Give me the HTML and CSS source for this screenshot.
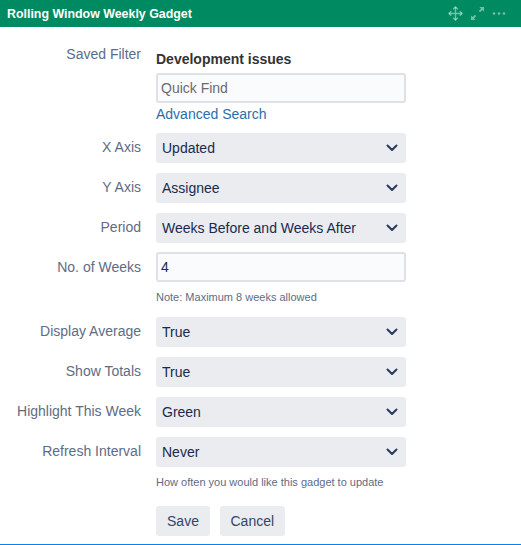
FILE: index.html
```html
<!DOCTYPE html>
<html lang="en">
<head>
    <meta charset="UTF-8">
    <meta name="viewport" content="width=device-width, initial-scale=1.0">
    <title>Rolling Window Weekly Gadget</title>
    <link rel="stylesheet" href="styles.css">
</head>
<body>
    <div class="gadget">
        <div class="gadget-header">
            <h1>Rolling Window Weekly Gadget</h1>
            <div class="header-icons">
                <svg width="15" height="15" viewBox="0 0 16 16" fill="none" stroke="currentColor" stroke-width="1.500">
                    <path d="M8 1v14M1 8h14"/>
                    <path d="M5.500 3.500 8 1l2.500 2.500M5.500 12.500 8 15l2.500-2.500M3.500 5.500 1 8l2.500 2.500M12.500 5.500 15 8l-2.500 2.500"/>
                </svg>
                <svg width="15" height="15" viewBox="0 0 16 16" fill="currentColor">
                    <path d="M10 1h5v5l-1.800-1.800-2.500 2.500-1.400-1.400 2.500-2.500z"/>
                    <path d="M6 15H1v-5l1.800 1.800 2.500-2.500 1.400 1.400-2.500 2.500z"/>
                </svg>
                <svg width="14" height="15" viewBox="0 0 14 15" fill="currentColor">
                    <circle cx="2" cy="7.500" r="1.300"/>
                    <circle cx="7" cy="7.500" r="1.300"/>
                    <circle cx="12" cy="7.500" r="1.300"/>
                </svg>
            </div>
        </div>

        <form class="gadget-form">
            <div class="form-row filter-row">
                <label>Saved Filter</label>
                <div class="field">
                    <div class="filter-name">Development issues</div>
                    <input type="text" class="text-input quick-find" placeholder="Quick Find">
                    <a href="#" class="advanced-link">Advanced Search</a>
                </div>
            </div>

            <div class="form-row">
                <label for="xAxis">X Axis</label>
                <div class="field">
                    <select id="xAxis"><option>Updated</option></select>
                </div>
            </div>

            <div class="form-row">
                <label for="yAxis">Y Axis</label>
                <div class="field">
                    <select id="yAxis"><option>Assignee</option></select>
                </div>
            </div>

            <div class="form-row period-row">
                <label for="period">Period</label>
                <div class="field">
                    <select id="period"><option>Weeks Before and Weeks After</option></select>
                </div>
            </div>

            <div class="form-row weeks-row">
                <label for="weeks">No. of Weeks</label>
                <div class="field">
                    <input type="text" id="weeks" class="text-input" value="4">
                    <div class="hint">Note: Maximum 8 weeks allowed</div>
                </div>
            </div>

            <div class="form-row">
                <label for="average">Display Average</label>
                <div class="field">
                    <select id="average"><option>True</option></select>
                </div>
            </div>

            <div class="form-row">
                <label for="totals">Show Totals</label>
                <div class="field">
                    <select id="totals"><option>True</option></select>
                </div>
            </div>

            <div class="form-row">
                <label for="highlight">Highlight This Week</label>
                <div class="field">
                    <select id="highlight"><option>Green</option></select>
                </div>
            </div>

            <div class="form-row">
                <label for="refresh">Refresh Interval</label>
                <div class="field">
                    <select id="refresh"><option>Never</option></select>
                    <div class="hint">How often you would like this gadget to update</div>
                </div>
            </div>

            <div class="form-row buttons-row">
                <div class="field buttons">
                    <button type="button">Save</button>
                    <button type="button">Cancel</button>
                </div>
            </div>
        </form>
    </div>
</body>
</html>
```

FILE: styles.css
```css
* {
    box-sizing: border-box;
}

body {
    margin: 0;
    background-color: white;
    font-family: "Liberation Sans", Arial, sans-serif;
    font-size: 14px;
    color: #172b4d;
}

.gadget {
    height: 545px;
    border-bottom: 1px solid #0482ef;
}

.gadget-header {
    height: 27px;
    padding: 0 7px;
    display: flex;
    align-items: center;
    justify-content: space-between;
    background-color: #008a61;
}

.gadget-header h1 {
    margin: 0;
    font-size: 12.400px;
    font-weight: 700;
    color: white;
}

.header-icons {
    display: flex;
    align-items: center;
    gap: 7px;
    padding-right: 8px;
    color: rgba(255,255,255,0.45);
}

.gadget-form {
    padding-top: 10px;
}

.form-row {
    display: grid;
    grid-template-columns: 141px 250px;
    column-gap: 15px;
    margin-bottom: 10px;
}

.form-row label {
    padding-top: 5px;
    text-align: right;
    color: #5e6c84;
    line-height: 18px;
}

.filter-row label {
    padding-top: 8px;
}

.period-row {
    margin-bottom: 9px;
}

.weeks-row label {
    padding-top: 6px;
}

.field {
    grid-column: 2;
    min-width: 0;
}

.filter-name {
    margin-top: 14px;
    margin-bottom: 6px;
    font-weight: 700;
    line-height: 16px;
    color: #333;
}

.text-input {
    display: block;
    width: 100%;
    height: 30px;
    padding: 0 3px;
    border: 2px solid #dfe1e6;
    border-radius: 3px;
    background-color: #fafbfc;
    font: inherit;
    color: #172b4d;
}

.text-input::placeholder {
    color: #6b6b6b;
    opacity: 1;
}

.advanced-link {
    display: block;
    margin-top: 2px;
    line-height: 18px;
    color: #2a6ead;
    text-decoration: none;
}

select {
    display: block;
    width: 100%;
    height: 30px;
    padding: 0 30px 0 6px;
    border: none;
    border-radius: 3px;
    font: inherit;
    color: #172b4d;
    -webkit-appearance: none;
    appearance: none;
    background-color: #ebecf0;
    background-image: url("data:image/svg+xml;charset=UTF-8,%3csvg xmlns='http://www.w3.org/2000/svg' viewBox='0 0 12 8' fill='none' stroke='%23253858' stroke-width='2' stroke-linecap='round' stroke-linejoin='round'%3e%3cpolyline points='1.500 1.500 6 6 10.500 1.500'%3e%3c/polyline%3e%3c/svg%3e");
    background-repeat: no-repeat;
    background-position: right 8px center;
    background-size: 12px 8px;
}

.hint {
    margin-top: 8px;
    padding-bottom: 3px;
    font-size: 11px;
    line-height: 14px;
    color: #5e6c84;
}

.buttons {
    display: flex;
    gap: 10px;
    margin-top: 4px;
}

button {
    min-width: 54px;
    height: 30px;
    padding: 0 10.500px;
    border: none;
    border-radius: 3px;
    background-color: #ebecf0;
    font: inherit;
    color: #344563;
}
```
